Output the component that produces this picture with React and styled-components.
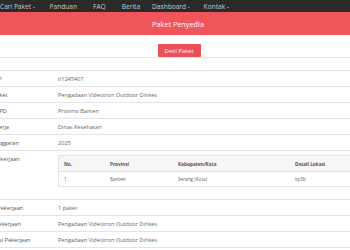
import React from "react";
import styled, { createGlobalStyle } from "styled-components";

const Global = createGlobalStyle`
  html, body { margin: 0; padding: 0; background: #fff; overflow: hidden; }
  body { font-family: "Open Sans", "Liberation Sans", sans-serif; }
`;

const Page = styled.div`
  margin-left: -30px;
  width: 416px;
`;

const NavBar = styled.nav`
  height: 12px;
  background: #2a2a2a;
  display: flex;
  align-items: flex-end;
  padding-left: 30px;
`;

const NavItem = styled.span`
  font-size: 6.6px;
  line-height: 11px;
  color: #c9c9c9;
  margin-right: ${(p) => p.$gap}px;
  white-space: nowrap;
`;

const Caret = styled.span`
  display: inline-block;
  width: 0;
  height: 0;
  margin-left: 1.5px;
  vertical-align: middle;
  border-left: 1.7px solid transparent;
  border-right: 1.7px solid transparent;
  border-top: 1.7px solid #c9c9c9;
`;

const Header = styled.div`
  height: 23px;
  background: #f0555a;
  color: #fff;
  font-size: 7.3px;
  display: flex;
  align-items: center;
  justify-content: center;
`;

const ButtonBar = styled.div`
  height: 22px;
  border-bottom: 1px solid #e6e6e6;
  display: flex;
  align-items: flex-end;
  justify-content: center;
`;

const RedButton = styled.button`
  height: 13px;
  width: 43px;
  margin-left: 2px;
  padding: 0;
  border: none;
  border-radius: 1px;
  background: #ec4f55;
  color: #fff;
  font-family: inherit;
  font-size: 5.8px;
`;

const Body = styled.div`
  padding-top: 12px;
`;

const Table = styled.div`
  display: grid;
  grid-template-columns: 84px 1fr;
  border-top: 1px solid #e3e3e3;
`;

const LabelCell = styled.div`
  padding: ${(p) => (p.$tall ? "4px 6px 0" : "0 6px")};
  height: ${(p) => p.$h}px;
  display: flex;
  align-items: ${(p) => (p.$tall ? "flex-start" : "center")};
  font-size: 5.6px;
  color: #555;
  border-bottom: 1px solid #e3e3e3;
  white-space: nowrap;
`;

const ValueCell = styled.div`
  padding: ${(p) => (p.$tall ? "4px 0 0 4px" : "0 4px")};
  height: ${(p) => p.$h}px;
  display: flex;
  align-items: ${(p) => (p.$tall ? "flex-start" : "center")};
  font-size: 5.6px;
  color: #666;
  border-bottom: 1px solid #e3e3e3;
  white-space: nowrap;
  overflow: hidden;
`;

const Inner = styled.table`
  border-collapse: collapse;
  width: 330px;
  font-size: 4.7px;
  color: #666;
  border: 1px solid #e3e3e3;
`;

const Th = styled.th`
  text-align: left;
  font-weight: 700;
  color: #555;
  background: #f6f6f6;
  height: 15px;
  padding: 0 0 0 ${(p) => p.$pl || 0}px;
  width: ${(p) => p.$w}px;
  border-bottom: 1px solid #e3e3e3;
`;

const Td = styled.td`
  height: 14px;
  padding: 0 0 0 ${(p) => p.$pl || 0}px;
`;

const rowsTop = [
  ["Kode RUP", "61245407"],
  ["Nama Paket", "Pengadaan Videotron Outdoor Dinkes"],
  ["Nama KLPD", "Provinsi Banten"],
  ["Satuan Kerja", "Dinas Kesehatan"],
  ["Tahun Anggaran", "2025"],
];

const rowsBottom = [
  ["Volume Pekerjaan", "1 paket"],
  ["Uraian Pekerjaan", "Pengadaan Videotron Outdoor Dinkes"],
  ["Spesifikasi Pekerjaan", "Pengadaan Videotron Outdoor Dinkes"],
];

export default function App() {
  return (
    <Page>
      <Global />
      <NavBar>
        <NavItem $gap={15}>Cari Paket<Caret /></NavItem>
        <NavItem $gap={16}>Panduan</NavItem>
        <NavItem $gap={16}>FAQ</NavItem>
        <NavItem $gap={12}>Berita</NavItem>
        <NavItem $gap={14}>Dashboard<Caret /></NavItem>
        <NavItem $gap={0}>Kontak<Caret /></NavItem>
      </NavBar>
      <Header>Paket Penyedia</Header>
      <ButtonBar>
        <RedButton>Detil Paket</RedButton>
      </ButtonBar>
      <Body>
        <Table>
          {rowsTop.map(([l, v]) => (
            <React.Fragment key={l}>
              <LabelCell $h={15}>{l}</LabelCell>
              <ValueCell $h={15}>{v}</ValueCell>
            </React.Fragment>
          ))}
          <LabelCell $h={44} $tall>Lokasi Pekerjaan</LabelCell>
          <ValueCell $h={44} $tall>
            <Inner>
              <thead>
                <tr>
                  <Th $w={46} $pl={5}>No.</Th>
                  <Th $w={68}>Provinsi</Th>
                  <Th $w={117}>Kabupaten/Kota</Th>
                  <Th>Detail Lokasi</Th>
                </tr>
              </thead>
              <tbody>
                <tr>
                  <Td $pl={5}>1.</Td>
                  <Td>Banten</Td>
                  <Td>Serang (Kota)</Td>
                  <Td>kp3b</Td>
                </tr>
              </tbody>
            </Inner>
          </ValueCell>
          {rowsBottom.map(([l, v]) => (
            <React.Fragment key={l}>
              <LabelCell $h={15}>{l}</LabelCell>
              <ValueCell $h={15}>{v}</ValueCell>
            </React.Fragment>
          ))}
        </Table>
      </Body>
    </Page>
  );
}
